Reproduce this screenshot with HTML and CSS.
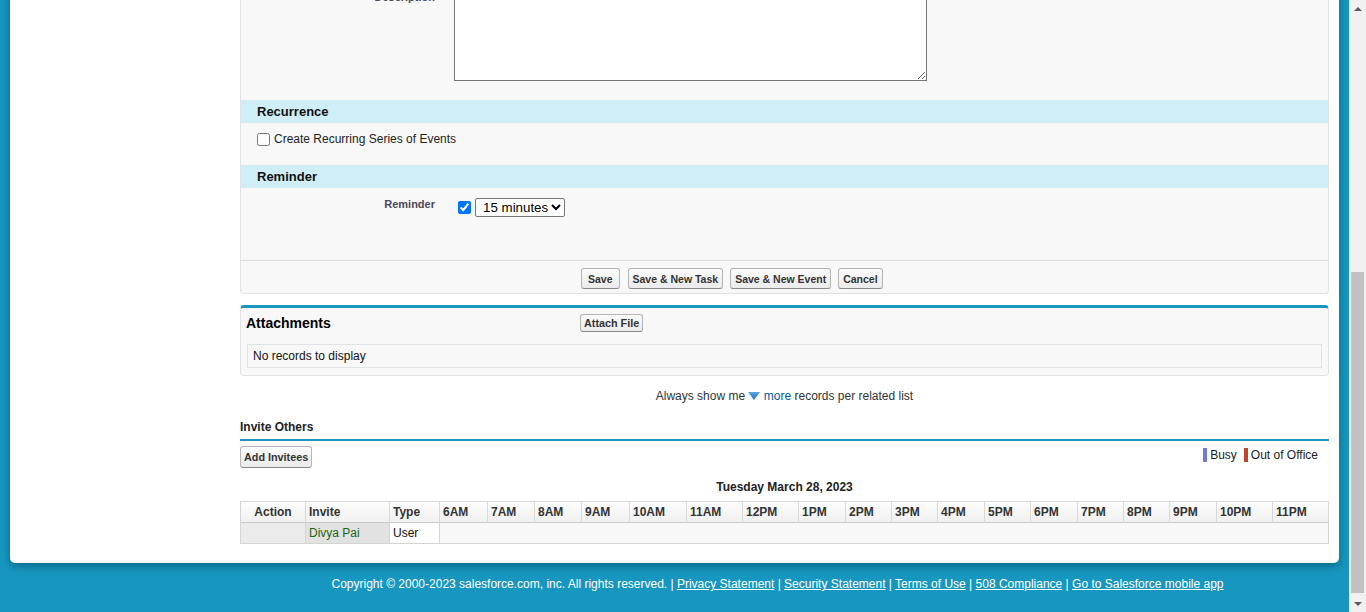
FILE: index.html
```html
<!DOCTYPE html>
<html lang="en">
<head>
<meta charset="utf-8">
<title>New Event</title>
<link rel="stylesheet" href="styles.css">
</head>
<body>
<div class="viewport">
  <div class="page">
    <div class="card">
      <div class="sidebar"></div>
      <div class="main">
        <div class="pb-body">
          <div class="field-row desc-row">
            <div class="label-col">Description</div>
            <div class="data-col"><textarea class="desc-area"></textarea></div>
          </div>
          <div class="subheader"><h3>Recurrence</h3></div>
          <div class="rec-body">
            <label class="chk-label"><input type="checkbox" class="chk chk-rec">Create Recurring Series of Events</label>
          </div>
          <div class="subheader"><h3>Reminder</h3></div>
          <div class="field-row rem-row">
            <div class="label-col">Reminder</div>
            <div class="data-col rem-data">
              <input type="checkbox" class="chk" checked>
              <select class="rem-select">
                <option>15 minutes</option>
              </select>
            </div>
          </div>
          <div class="bottom-buttons">
            <button class="btn btn-main btn-save">Save</button>
            <button class="btn btn-main">Save &amp; New Task</button>
            <button class="btn btn-main">Save &amp; New Event</button>
            <button class="btn btn-main">Cancel</button>
          </div>
        </div>

        <div class="related">
          <div class="related-head">
            <h3 class="related-title">Attachments</h3>
            <button class="btn btn-small">Attach File</button>
          </div>
          <div class="no-records">No records to display</div>
        </div>

        <div class="show-more">Always show me <svg class="tri" width="12" height="9" viewBox="0 0 12 9"><defs><linearGradient id="tg" x1="0" y1="0" x2="0" y2="1"><stop offset="0" stop-color="#5aa6e6"/><stop offset="1" stop-color="#1f6fc0"/></linearGradient></defs><polygon points="0,0 12,0 6,8" fill="url(#tg)"/></svg> <span class="more-link">more</span> records per related list</div>

        <h3 class="invite-title">Invite Others</h3>
        <div class="invite-bar">
          <button class="btn btn-invite">Add Invitees</button>
          <div class="legend">
            <span class="swatch swatch-busy"></span><span class="legend-text">Busy</span>
            <span class="swatch swatch-ooo"></span><span class="legend-text">Out of Office</span>
          </div>
        </div>
        <div class="sched-date">Tuesday March 28, 2023</div>
        <div class="sched">
          <div class="th th-action">Action</div>
          <div class="th">Invite</div>
          <div class="th">Type</div>
          <div class="th">6AM</div>
          <div class="th">7AM</div>
          <div class="th">8AM</div>
          <div class="th">9AM</div>
          <div class="th">10AM</div>
          <div class="th">11AM</div>
          <div class="th">12PM</div>
          <div class="th">1PM</div>
          <div class="th">2PM</div>
          <div class="th">3PM</div>
          <div class="th">4PM</div>
          <div class="th">5PM</div>
          <div class="th">6PM</div>
          <div class="th">7PM</div>
          <div class="th">8PM</div>
          <div class="th">9PM</div>
          <div class="th">10PM</div>
          <div class="th">11PM</div>
          <div class="td td-action"></div>
          <div class="td td-invite">Divya Pai</div>
          <div class="td td-type">User</div>
          <div class="td td-slots"></div>
        </div>
      </div>
    </div>
    <div class="footer">Copyright © 2000-2023 salesforce.com, inc. All rights reserved. | <a href="#">Privacy Statement</a> | <a href="#">Security Statement</a> | <a href="#">Terms of Use</a> | <a href="#">508 Compliance</a> | <a href="#">Go to Salesforce mobile app</a></div>
  </div>
  <div class="scrollbar">
    <div class="sb-btn"><span class="arrow-up"></span></div>
    <div class="sb-track"><div class="sb-thumb"></div></div>
    <div class="sb-btn"><span class="arrow-down"></span></div>
  </div>
</div>
</body>
</html>
```

FILE: styles.css
```css
html, body {
  margin: 0;
  padding: 0;
  height: 612px;
  overflow: hidden;
}
body {
  font-family: "Liberation Sans", Arial, Helvetica, sans-serif;
  font-size: 12px;
  color: #222;
}
.viewport {
  display: flex;
  height: 612px;
  overflow: hidden;
}
.page {
  flex: 1;
  min-width: 0;
  background: #1797c0;
  display: flex;
  flex-direction: column;
}
.card {
  margin: -11px 10px 0;
  background: #fff;
  border-radius: 0 0 5px 5px;
  display: flex;
  padding-bottom: 19px;
  box-shadow: 0 3px 9px rgba(0, 40, 60, 0.45);
  flex: none;
}
.sidebar {
  width: 230px;
  flex: none;
}
.main {
  width: 1089px;
  flex: none;
  margin-right: 10px;
}

/* form block */
.pb-body {
  background: #f8f8f8;
  border: 1px solid #e0e3e5;
  border-top: none;
  border-radius: 0 0 4px 4px;
}
.field-row {
  display: flex;
}
.label-col {
  width: 213px;
  flex: none;
  box-sizing: border-box;
  padding-right: 19px;
  text-align: right;
  font-size: 11px;
  font-weight: bold;
  color: #4a4a56;
}
.desc-row {
  padding: 2px 0 19px;
}
.desc-area {
  display: block;
  margin: 0;
  width: 473px;
  height: 90px;
  box-sizing: border-box;
  border: 1px solid #767676;
  background: #fff;
}
.subheader {
  height: 23px;
  background: #cfeef8;
  padding-left: 16px;
}
.subheader h3 {
  margin: 0;
  font-size: 13px;
  font-weight: bold;
  line-height: 23px;
  color: #111;
}
.rec-body {
  height: 42px;
  box-sizing: border-box;
  padding: 7px 0 0 12px;
}
.chk-label {
  display: flex;
  align-items: center;
  font-size: 12px;
  line-height: 17px;
  color: #222;
}
.chk {
  width: 13px;
  height: 13px;
  margin: 3px 3px 3px 4px;
}
.chk-rec {
  margin-right: 4px;
}
.rem-row {
  height: 72px;
  box-sizing: border-box;
  padding-top: 10px;
}
.rem-data {
  display: flex;
  align-items: flex-start;
}
.rem-select {
  margin: 0 0 0 1px;
  height: 19px;
  width: 90px;
  font-family: "Liberation Sans", Arial, sans-serif;
  font-size: 13.33px;
  color: #000;
  border: 1px solid #767676;
  border-radius: 2px;
  background: #fff;
  padding: 0 0 0 3px;
}
.bottom-buttons {
  border-top: 1px solid #dbdbdb;
  display: flex;
  gap: 7px;
  padding: 7px 0 4px 340px;
}

/* buttons */
.btn {
  font-family: "Liberation Sans", Arial, sans-serif;
  font-size: 10.8px;
  font-weight: bold;
  color: #333;
  border: 1px solid #b5b5b5;
  border-bottom-color: #8a8a8a;
  border-radius: 3px;
  background: linear-gradient(#fbfbfb, #ebebeb);
  margin: 0;
  box-sizing: border-box;
  cursor: pointer;
  white-space: nowrap;
}
.btn-main {
  height: 21px;
  padding: 0 4px;
  font-size: 10.5px;
}
.btn-save {
  padding: 0 6px;
  margin-right: 1px;
}
.btn-small {
  height: 18px;
  padding: 0 3px;
}
.btn-invite {
  height: 22px;
  padding: 0 3px;
}

/* related list */
.related {
  margin-top: 11px;
  background: #f8f8f8;
  border: 1px solid #e0e3e5;
  border-top: 3px solid #1797c0;
  border-radius: 4px;
  padding-bottom: 7px;
}
.related-head {
  display: flex;
  align-items: center;
  height: 30px;
}
.related-title {
  width: 339px;
  box-sizing: border-box;
  padding-left: 5px;
  margin: 0;
  font-size: 14px;
  font-weight: bold;
  color: #000;
}
.no-records {
  margin: 6px 6px 0;
  height: 24px;
  box-sizing: border-box;
  border: 1px solid #e0e3e5;
  background: #f8f8f8;
  padding-left: 5px;
  line-height: 23px;
  font-size: 12px;
  color: #111;
}
.show-more {
  margin-top: 13px;
  line-height: 14px;
  text-align: center;
  font-size: 12px;
  color: #333;
}
.tri {
  vertical-align: -1px;
}
.more-link {
  color: #015ba7;
}

/* invite */
.invite-title {
  margin: 17px 0 0;
  line-height: 14px;
  padding-bottom: 5px;
  border-bottom: 2px solid #1797c0;
  font-size: 12px;
  font-weight: bold;
  color: #222;
}
.invite-bar {
  margin-top: 5px;
  display: flex;
  justify-content: space-between;
  align-items: flex-start;
}
.legend {
  display: flex;
  align-items: center;
  padding: 2px 11px 0 0;
  font-size: 12px;
  color: #222;
}
.swatch {
  width: 4px;
  height: 14px;
  display: block;
}
.swatch-busy {
  background: #6c7bd4;
  margin-right: 3px;
}
.swatch-ooo {
  background: #bf452c;
  margin: 0 3px 0 7px;
}
.legend-text {
  line-height: 14px;
}
.sched-date {
  margin-top: 12px;
  line-height: 14px;
  text-align: center;
  font-size: 12px;
  font-weight: bold;
  color: #222;
}
.sched {
  margin-top: 7px;
  display: grid;
  grid-template-columns: 65px 84px 50px 48px 47px 47px 48px 57px 56px 56px 47px 46px 46px 47px 46px 47px 46px 46px 47px 56px 56px;
  border-left: 1px solid #d4d4d4;
  border-top: 1px solid #dadada;
}
.th {
  height: 21px;
  box-sizing: border-box;
  border-right: 1px solid #d9d9d9;
  border-bottom: 1px solid #c9c9c9;
  background: linear-gradient(#fdfdfd, #f0f0f0);
  padding-left: 3px;
  line-height: 20px;
  font-size: 12px;
  font-weight: bold;
  color: #333;
  white-space: nowrap;
}
.th-action {
  text-align: center;
  padding-left: 0;
}
.td {
  height: 21px;
  box-sizing: border-box;
  border-right: 1px solid #d4d4d4;
  border-bottom: 1px solid #d4d4d4;
  padding-left: 3px;
  line-height: 20px;
  font-size: 12px;
  color: #111;
}
.td-action {
  background: #ebebeb;
}
.td-invite {
  background: #e2e2e2;
  color: #1d6412;
}
.td-type {
  background: #fff;
}
.td-slots {
  grid-column: 4 / -1;
  background: #f8f8f8;
}

/* footer */
.footer {
  margin-top: 14px;
  padding: 0 10px 0 216px;
  line-height: 14px;
  text-align: center;
  font-size: 12px;
  color: #fff;
  white-space: nowrap;
}
.footer a {
  color: #fff;
  text-decoration: underline;
}

/* scrollbar */
.scrollbar {
  width: 17px;
  flex: none;
  background: #f1f1f1;
  display: flex;
  flex-direction: column;
}
.sb-btn {
  height: 17px;
  flex: none;
  display: flex;
  align-items: center;
  justify-content: center;
}
.sb-track {
  flex: 1;
}
.sb-thumb {
  margin: 255px 2px 0;
  height: 321px;
  background: #c1c1c1;
}
.arrow-up {
  width: 0;
  height: 0;
  border-left: 4px solid transparent;
  border-right: 4px solid transparent;
  border-bottom: 4px solid #5a5a5a;
}
.arrow-down {
  width: 0;
  height: 0;
  border-left: 4px solid transparent;
  border-right: 4px solid transparent;
  border-top: 4px solid #5a5a5a;
}
```
